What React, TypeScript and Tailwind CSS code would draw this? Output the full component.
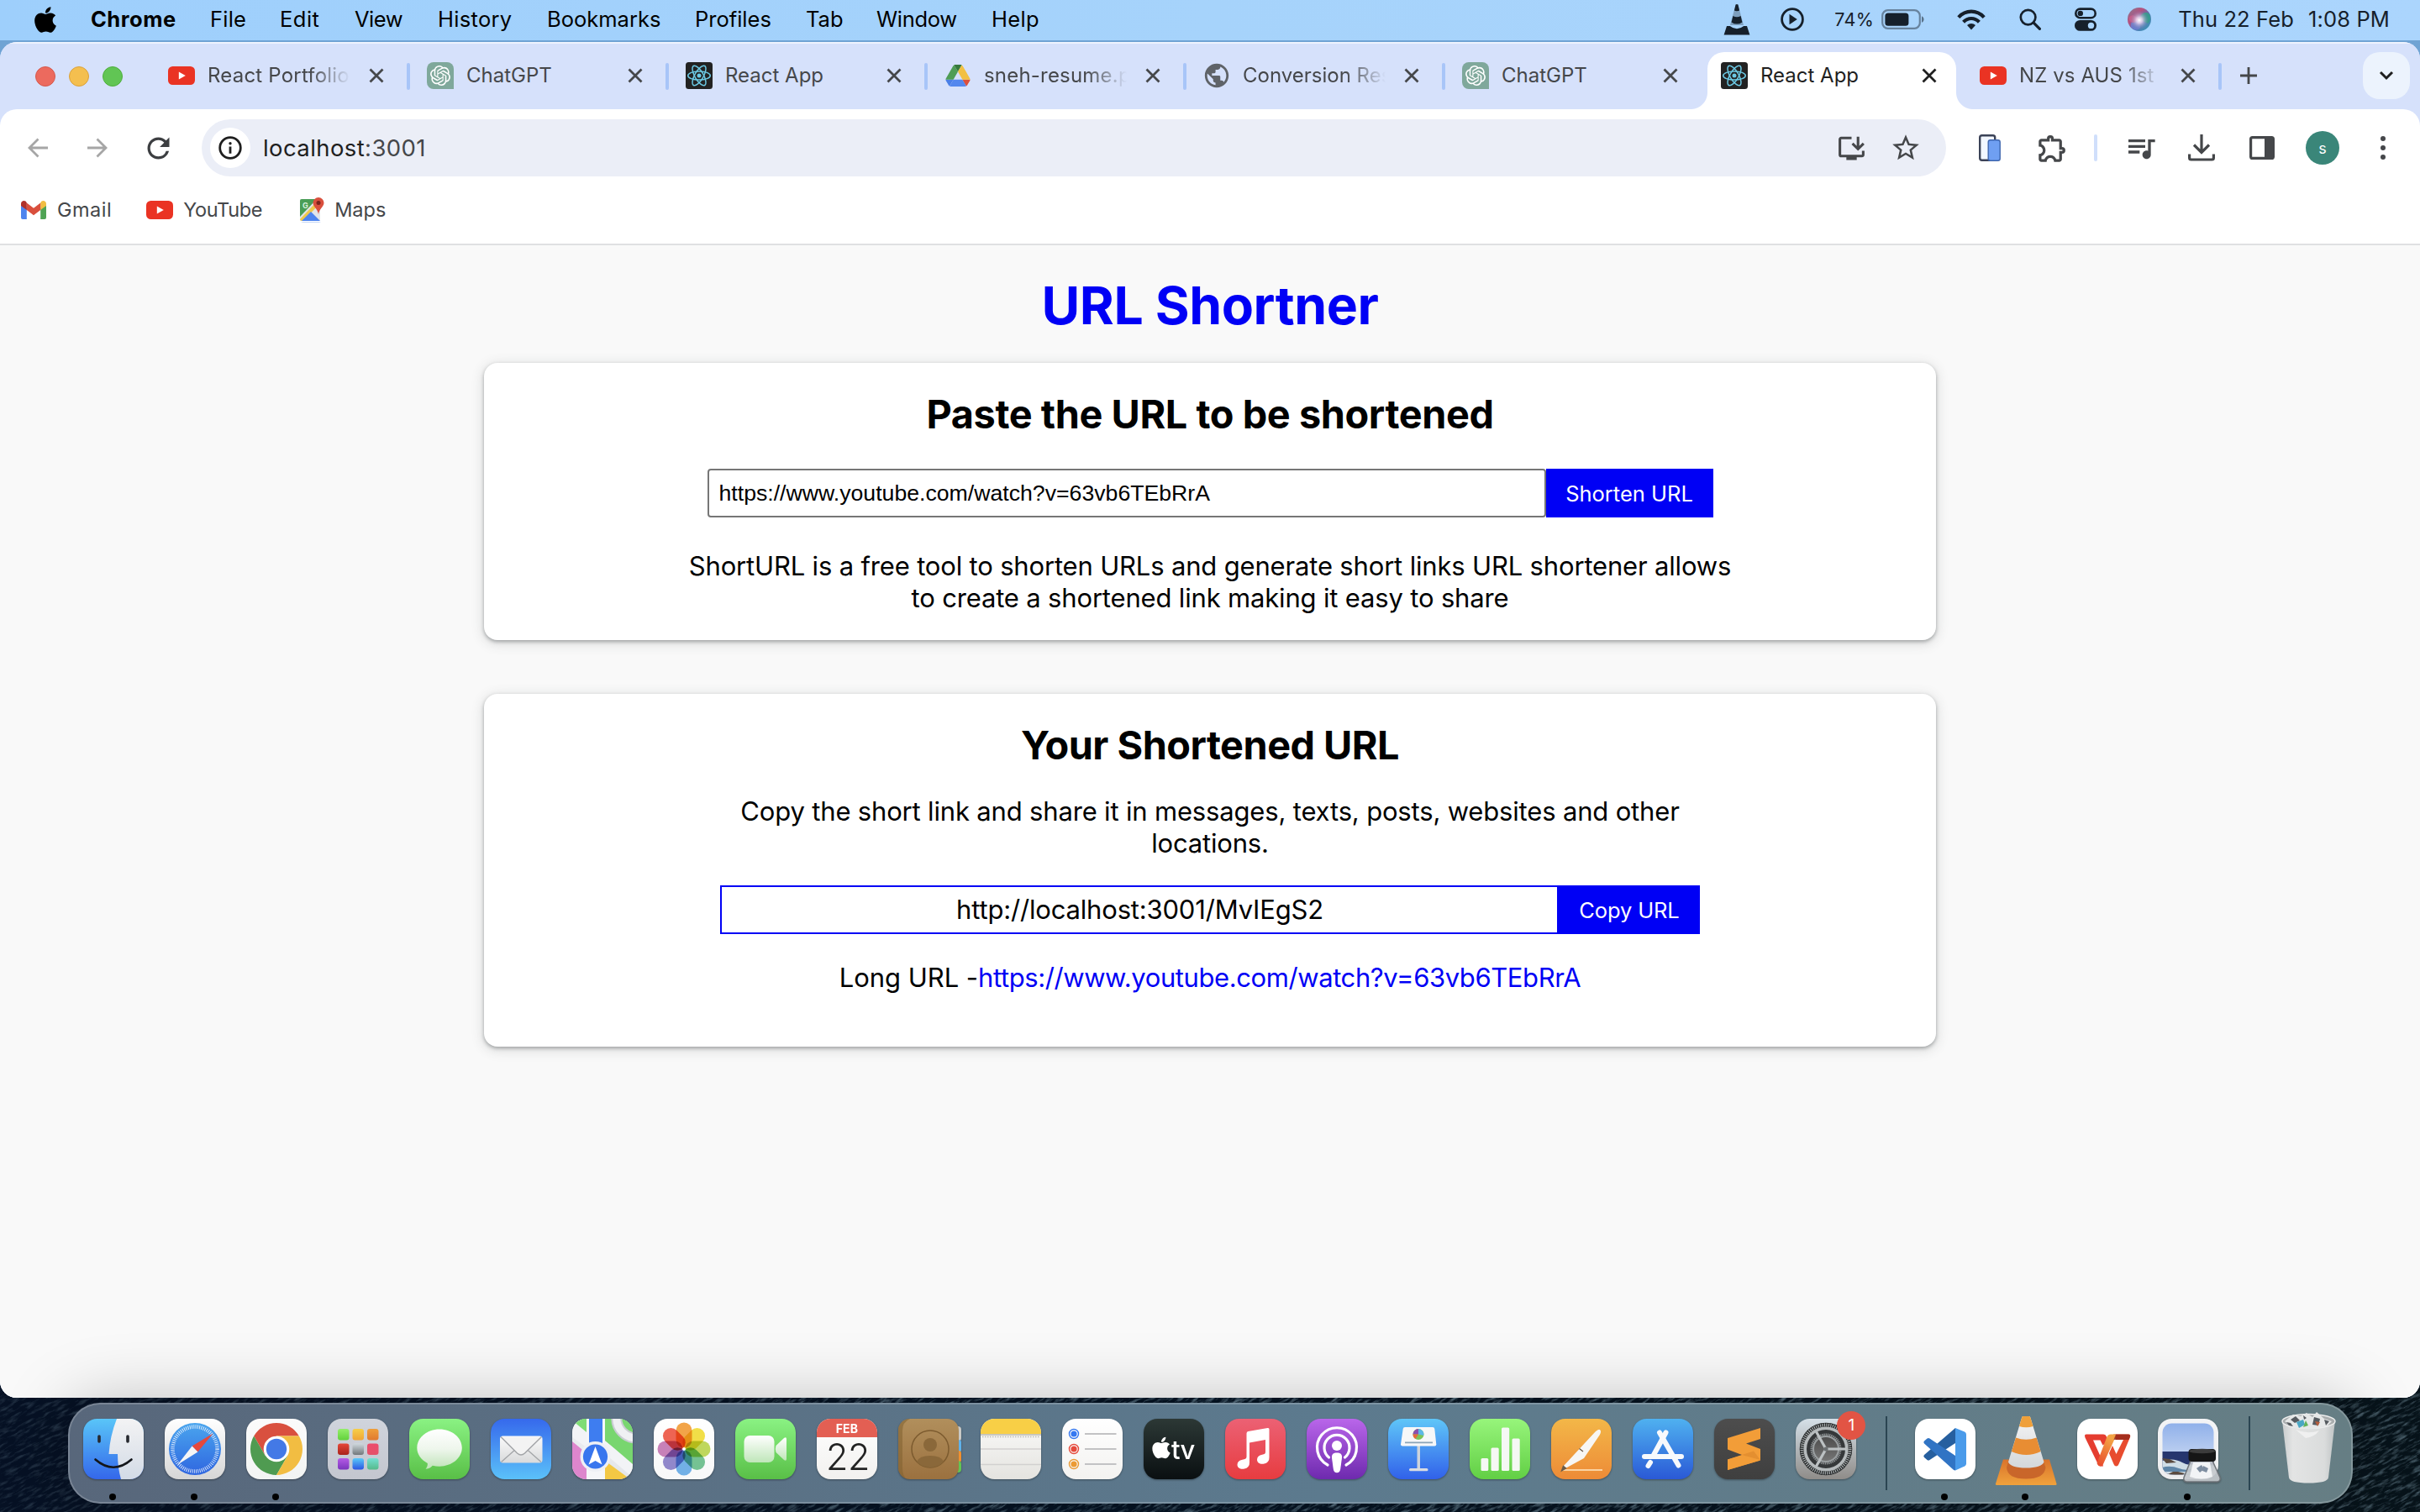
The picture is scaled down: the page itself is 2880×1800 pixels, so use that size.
import React from "react";
import { FaApple } from "react-icons/fa";
import { SiOpenai } from "react-icons/si";
import {
  MdOutlineInstallDesktop,
  MdStarOutline,
  MdOutlineExtension,
  MdQueueMusic,
  MdRefresh,
  MdPublic,
} from "react-icons/md";

/* ---------------------------------------------------------------- menu bar */

const menuItems: { label: string; cls: string }[] = [
  { label: "Chrome", cls: "w-[142px] font-bold tracking-[0.5px]" },
  { label: "File", cls: "w-[83px] tracking-[0.2px]" },
  { label: "Edit", cls: "w-[89px] tracking-[0.5px]" },
  { label: "View", cls: "w-[99px] tracking-[-0.5px]" },
  { label: "History", cls: "w-[130px] tracking-[0.3px]" },
  { label: "Bookmarks", cls: "w-[176px]" },
  { label: "Profiles", cls: "w-[132px]" },
  { label: "Tab", cls: "w-[84px]" },
  { label: "Window", cls: "w-[137px] tracking-[-0.3px]" },
  { label: "Help", cls: "tracking-[0.3px]" },
];

function Siri() {
  return (
    <svg viewBox="0 0 28 28" className="h-7 w-7">
      <defs>
        <radialGradient id="siriCore" cx=".5" cy=".52" r=".5">
          <stop offset="0" stopColor="#fff" />
          <stop offset=".3" stopColor="#e9d5ee" stopOpacity=".85" />
          <stop offset="1" stopColor="#5a6ea0" stopOpacity="0" />
        </radialGradient>
        <linearGradient id="siriRing" x1="0" y1="0" x2="1" y2="1">
          <stop offset="0" stopColor="#7d7e93" />
          <stop offset=".35" stopColor="#b8507e" />
          <stop offset=".6" stopColor="#4f74b5" />
          <stop offset="1" stopColor="#3aa0b4" />
        </linearGradient>
      </defs>
      <circle cx="14" cy="14" r="14" fill="url(#siriRing)" />
      <path d="M14 14C16 6 22 4 26 8C28 12 27 17 24 19Z" fill="#2fa584" opacity=".8" />
      <path d="M14 14C6 14 3 18 4 23C8 28 14 27 15 24Z" fill="#6f7fd6" opacity=".8" />
      <path d="M14 14C8 8 4 8 2 12C1 16 4 18 8 18Z" fill="#d85b88" opacity=".8" />
      <circle cx="14" cy="14.5" r="12" fill="url(#siriCore)" />
    </svg>
  );
}

function MenuBar() {
  return (
    <header className="flex h-12 shrink-0 items-center bg-gradient-to-r from-[#9ecffc] via-[#a6d3fb] to-[#abd5fd] pb-[2px] pl-[37px] text-[25.5px] leading-[46px] text-black">
      <FaApple className="mr-[37px] h-[35px] w-[34px] shrink-0" />
      <nav className="flex">
        {menuItems.map((m) => (
          <span key={m.label} className={m.cls}>
            {m.label}
          </span>
        ))}
      </nav>
      <div className="ml-auto flex items-center pr-[36px] text-[#16202b]">
        <svg viewBox="0 0 32 38" className="mr-[36px] h-[38px] w-8">
          <path d="M14.6 1.5h2.8L24 26H8z" fill="#7e9fbe" />
          <path d="M14.6 1.5q1.4-1 2.8 0l1.7 7q-3.1 1.6-6.2 0zM11.4 15q4.6 2.4 9.2 0l1.8 7.4q-6.4 4.4-12.8 0zM4 27h3.8q8.2 6.6 16.4 0H28l3.4 10.6H.6z" fill="#16202b" />
        </svg>
        <svg viewBox="0 0 28 28" className="mr-[36px] h-7 w-7">
          <circle cx="14" cy="14" r="12.4" fill="none" stroke="#16202b" strokeWidth="2.8" />
          <path d="M10.5 7.8l9.3 6.2-9.3 6.2z" fill="#16202b" />
        </svg>
        <span className="mr-[9px] text-[21.5px] tracking-[0.4px]">74%</span>
        <svg viewBox="0 0 52 24" className="mr-[38px] h-6 w-[52px]">
          <rect x="1.2" y="1.2" width="44.6" height="21.6" rx="6.5" fill="none" stroke="#16202b" strokeOpacity=".45" strokeWidth="2.2" />
          <rect x="4.4" y="4.4" width="28" height="15.4" rx="3.6" fill="#16202b" />
          <path d="M48 8.2c3.4 1.4 3.4 6.2 0 7.6z" fill="#16202b" fillOpacity=".55" />
        </svg>
        <svg viewBox="0 0 34 25" className="mr-[40px] h-[25px] w-[34px]">
          <g fill="none" stroke="#16202b" strokeWidth="4.2">
            <path d="M1.8 9.6C10.4.4 23.6.4 32.2 9.6" />
            <path d="M7.6 15.2c5.4-5.6 13.4-5.6 18.8 0" />
          </g>
          <path d="M17 24.4l-5-5.4c2.9-2.7 7.1-2.7 10 0z" fill="#16202b" />
        </svg>
        <svg viewBox="0 0 26 26" className="mr-[40px] h-[26px] w-[26px]">
          <circle cx="10.6" cy="10.6" r="8.8" fill="none" stroke="#16202b" strokeWidth="2.7" />
          <path d="M17.2 17.2L24.4 24.4" stroke="#16202b" strokeWidth="3.2" strokeLinecap="round" />
        </svg>
        <svg viewBox="0 0 26 28" className="mr-[37px] h-7 w-[26px]">
          <rect x="1.3" y="1.6" width="23.4" height="10.6" rx="5.3" fill="none" stroke="#16202b" strokeWidth="2.6" />
          <circle cx="6.8" cy="6.9" r="3.2" fill="#16202b" />
          <rect x="0" y="15" width="26" height="12.8" rx="6.4" fill="#16202b" />
          <circle cx="19.5" cy="21.4" r="3.7" fill="#abd5fd" />
        </svg>
        <Siri />
        <span className="ml-[32px] tracking-[0.1px]">Thu 22 Feb</span>
        <span className="ml-[17px] tracking-[0.15px]">1:08 PM</span>
      </div>
    </header>
  );
}

/* ------------------------------------------------------------ browser tabs */

function YouTubeIcon() {
  return (
    <svg viewBox="0 0 32 22" className="h-[22px] w-8">
      <rect width="32" height="22" rx="5.5" fill="#ea3323" />
      <path d="M12.8 6.4l8 4.6-8 4.6z" fill="#fff" />
    </svg>
  );
}

function ChatGptIcon() {
  return (
    <span className="flex h-8 w-8 items-center justify-center rounded-[8px] rounded-br-none bg-[#7fa89b]">
      <SiOpenai className="h-[24px] w-[24px] text-white" />
    </span>
  );
}

function ReactIcon() {
  return (
    <svg viewBox="0 0 32 32" className="h-8 w-8">
      <rect width="32" height="32" rx="3.5" fill="#222" />
      <g fill="none" stroke="#6cc9e4" strokeWidth="1.5">
        <ellipse cx="16" cy="16" rx="13.3" ry="5.1" />
        <ellipse cx="16" cy="16" rx="13.3" ry="5.1" transform="rotate(60 16 16)" />
        <ellipse cx="16" cy="16" rx="13.3" ry="5.1" transform="rotate(120 16 16)" />
      </g>
      <circle cx="16" cy="16" r="2.5" fill="#6cc9e4" />
    </svg>
  );
}

function DriveIcon() {
  return (
    <svg viewBox="0 0 87.3 78" className="h-[26px] w-[30px]">
      <path d="M6.6 66.85l3.85 6.65c.8 1.4 1.95 2.5 3.3 3.3l13.75-23.8H0c0 1.55.4 3.1 1.2 4.5z" fill="#4a7fe6" />
      <path d="M43.65 25L29.9 1.2c-1.35.8-2.5 1.9-3.3 3.3L1.2 48.5A9 9 0 000 53h27.5z" fill="#4f9d55" />
      <path d="M73.55 76.8c1.35-.8 2.5-1.9 3.3-3.3l1.6-2.75L86.1 57.5c.8-1.4 1.2-2.95 1.2-4.5H59.8l5.85 11.5z" fill="#dc4f3c" />
      <path d="M43.65 25L57.4 1.2C56.05.4 54.5 0 52.9 0H34.4c-1.6 0-3.15.45-4.5 1.2z" fill="#377a3c" />
      <path d="M59.8 53H27.5L13.75 76.8c1.35.8 2.9 1.2 4.5 1.2h50.8c1.6 0 3.15-.45 4.5-1.2z" fill="#5387ee" />
      <path d="M73.4 26.5L60.7 4.5c-.8-1.4-1.95-2.5-3.3-3.3L43.65 25 59.8 53h27.45c0-1.55-.4-3.1-1.2-4.5z" fill="#f2c043" />
    </svg>
  );
}

type TabInfo = {
  title: string;
  icon: React.ReactNode;
  fade?: boolean;
  active?: boolean;
  sep?: boolean;
  track?: string;
};

const tabs: TabInfo[] = [
  { title: "React Portfolio", icon: <YouTubeIcon />, fade: true, sep: true, track: "tracking-[0.2px]" },
  { title: "ChatGPT", icon: <ChatGptIcon />, sep: true },
  { title: "React App", icon: <ReactIcon />, sep: true },
  { title: "sneh-resume.p", icon: <DriveIcon />, fade: true, sep: true, track: "tracking-[0.2px]" },
  { title: "Conversion Res", icon: <MdPublic className="h-[34px] w-[34px] shrink-0 text-[#5f6368]" />, fade: true, sep: true },
  { title: "ChatGPT", icon: <ChatGptIcon /> },
  { title: "React App", icon: <ReactIcon />, active: true },
  { title: "NZ vs AUS 1st", icon: <YouTubeIcon />, fade: true, sep: true, track: "tracking-[0.1px]" },
];

function CloseX({ dark }: { dark?: boolean }) {
  return (
    <svg viewBox="0 0 24 24" className="ml-[10px] h-6 w-6 shrink-0">
      <path d="M4.5 4.5l15 15M19.5 4.5l-15 15" stroke={dark ? "#1f1f1f" : "#45474a"} strokeWidth="2.8" />
    </svg>
  );
}

function Tab({ t }: { t: TabInfo }) {
  return (
    <div className="relative flex h-20 w-[308px] shrink-0 items-center pl-[22px]">
      {t.active && (
        <div className="absolute inset-x-[6px] top-[12px] bottom-0 rounded-t-[20px] bg-white">
          <span className="absolute bottom-0 -left-5 h-5 w-5 bg-[radial-gradient(circle_at_0_0,transparent_19.5px,white_20.5px)]" />
          <span className="absolute -right-5 bottom-0 h-5 w-5 bg-[radial-gradient(circle_at_100%_0,transparent_19.5px,white_20.5px)]" />
        </div>
      )}
      <span className="relative flex w-8 shrink-0 items-center justify-center">{t.icon}</span>
      <span
        className={`relative ml-[15px] block w-[179px] shrink-0 text-[24px] leading-[36px] whitespace-nowrap ${
          t.active ? "text-[#1f1f1f]" : "text-[#45474a]"
        } ${t.fade ? "[mask-image:linear-gradient(to_right,black_68%,transparent_95%)]" : ""} ${t.track ?? ""}`}
      >
        {t.title}
      </span>
      <span className="relative">
        <CloseX dark={t.active} />
      </span>
      {t.sep && <span className="absolute top-[25px] -right-[2px] h-8 w-1 rounded-full bg-[#a8c5f8]" />}
    </div>
  );
}

function TabStrip() {
  return (
    <div className="flex h-20 items-center bg-[#d6e1fb] pl-[42px] shadow-[inset_0_2px_0_#eef3fe]">
      <div className="flex w-[136px] shrink-0 gap-4 pt-[2px]">
        <span className="h-6 w-6 rounded-full border border-[#d5584c] bg-[#ec6a5e]" />
        <span className="h-6 w-6 rounded-full border border-[#dba13a] bg-[#f4bf4f]" />
        <span className="h-6 w-6 rounded-full border border-[#4fae3d] bg-[#61c554]" />
      </div>
      {tabs.map((t, i) => (
        <Tab key={i} t={t} />
      ))}
      <svg viewBox="0 0 24 24" className="ml-[22px] h-6 w-6 shrink-0">
        <path d="M12 2v20M2 12h20" stroke="#45474a" strokeWidth="2.8" />
      </svg>
      <span className="mr-3 ml-auto flex h-14 w-14 items-center justify-center rounded-[20px] bg-[#ecf3fd]">
        <svg viewBox="0 0 18 12" className="h-3 w-[18px]">
          <path d="M2 2l7 7 7-7" fill="none" stroke="#1f1f1f" strokeWidth="3" />
        </svg>
      </span>
    </div>
  );
}

/* ----------------------------------------------------------------- toolbar */

function Toolbar() {
  return (
    <div className="flex h-[92px] items-center pl-[33px] text-[#45474a]">
      <svg viewBox="0 0 24 24" className="mr-[47px] h-6 w-6">
        <path d="M24 12H2.500M12.500 1.500L2 12l10.500 10.500" fill="none" stroke="#a6a6a6" strokeWidth="2.8" />
      </svg>
      <svg viewBox="0 0 24 24" className="mr-[41px] h-6 w-6">
        <path d="M0 12h21.500M11.500 1.500L22 12 11.500 22.500" fill="none" stroke="#a6a6a6" strokeWidth="2.8" />
      </svg>
      <MdRefresh className="mr-[32px] h-[39px] w-[39px] shrink-0 text-[#3c3e41]" />
      <div className="flex h-[68px] w-[2076px] shrink-0 items-center rounded-full bg-[#ebeef7] pr-[29px] pl-[10px]">
        <span className="flex h-12 w-12 items-center justify-center rounded-full bg-white">
          <svg viewBox="0 0 28 28" className="h-7 w-7">
            <circle cx="14" cy="14" r="12.3" fill="none" stroke="#1f1f1f" strokeWidth="2.8" />
            <path d="M14 12.5v8.3" stroke="#1f1f1f" strokeWidth="2.8" />
            <circle cx="14" cy="8.7" r="1.7" fill="#1f1f1f" />
          </svg>
        </span>
        <span className="ml-[15px] pt-[1px] text-[27.5px] tracking-[0.4px] text-[#1f1f1f]">
          localhost<span className="text-[#45474a]">:3001</span>
        </span>
        <MdOutlineInstallDesktop className="mr-[27px] ml-auto h-[37px] w-[37px]" />
        <MdStarOutline className="h-[38px] w-[38px]" />
      </div>
      <svg viewBox="0 0 26 32" className="ml-[39px] h-8 w-[26px]">
        <rect x="1.2" y="1.2" width="18" height="29.6" rx="2.5" fill="#f2f7ff" stroke="#3b4257" strokeWidth="2.4" />
        <rect x="11.2" y="6.8" width="14" height="24.4" rx="2.5" fill="#6f9ff2" stroke="#3f66ae" strokeWidth="1.4" />
      </svg>
      <MdOutlineExtension className="ml-[42px] h-[39px] w-[39px]" />
      <span className="ml-[30px] h-8 w-1 rounded-full bg-[#d0dffb]" />
      <MdQueueMusic className="ml-[32px] h-[40px] w-[40px]" />
      <svg viewBox="0 0 32 32" className="ml-[36px] h-8 w-8">
        <path d="M16 0v21M7 12.500l9 9 9-9M1.600 23.500V28q0 2 2 2h24.800q2 0 2-2v-4.500" fill="none" stroke="#45474a" strokeWidth="3.2" />
      </svg>
      <svg viewBox="0 0 30 28" className="ml-[41px] h-7 w-[30px]">
        <rect x="1.6" y="1.6" width="26.8" height="24.8" rx="2" fill="none" stroke="#45474a" strokeWidth="3.2" />
        <path d="M18 1h11v26H18z" fill="#45474a" />
      </svg>
      <span className="ml-[37px] flex h-10 w-10 items-center justify-center rounded-full bg-[#3a8679] text-[18px] text-white">s</span>
      <span className="ml-[49px] flex flex-col gap-[5px]">
        <i className="h-[6px] w-[6px] rounded-full bg-[#45474a]" />
        <i className="h-[6px] w-[6px] rounded-full bg-[#45474a]" />
        <i className="h-[6px] w-[6px] rounded-full bg-[#45474a]" />
      </span>
    </div>
  );
}

function BookmarksBar() {
  return (
    <div className="flex h-[70px] items-center border-b-2 border-[#dfe0e2] pb-[12px] pl-[25px] text-[23.5px] text-[#45474a]">
      <svg viewBox="0 0 30 22" className="h-[22px] w-[30px]">
        <path d="M0 4v16q0 2 2 2h4.800V9z" fill="#4e84ee" />
        <path d="M30 4v16q0 2-2 2h-4.800V9z" fill="#4fa354" />
        <path d="M23.200 2.600V11L30 6V3.500C30 .4 26.600-1 24.200.8z" fill="#f2bd42" />
        <path d="M6.800 11V2.600L15 8.800l8.200-6.200V11L15 17.200z" fill="#d94f3d" />
        <path d="M0 3.500V6l6.800 5V2.600L5.800.8C3.400-1 0 .4 0 3.500z" fill="#b0312a" />
      </svg>
      <span className="ml-[13px] tracking-[0.5px]">Gmail</span>
      <span className="ml-[41px]">
        <YouTubeIcon />
      </span>
      <span className="ml-[12px] tracking-[-0.35px]">YouTube</span>
      <svg viewBox="0 0 30 30" className="ml-[44px] h-[30px] w-[30px]">
        <path d="M1 4q0-2 2-2h22v26H3q-2 0-2-2z" fill="#e2e5ea" />
        <path d="M1 4q0-2 2-2h18L1 23z" fill="#4a9e57" />
        <path d="M1 26L21 5l3 3L5 28H3q-2 0-2-2z" fill="#f0c84b" />
        <path d="M14 17l11 11H3z" fill="#4e84ee" />
        <path d="M2 30q2-1 3-1h19l2 1z" fill="#c6d7f6" />
        <text x="4" y="12.500" fontSize="9" fontWeight="700" fill="#d7f0da">G</text>
        <path d="M23 0a6.500 6.500 0 016.500 6.500C29.500 11 24 13.500 23 20c-1-6.500-6.500-9-6.500-13.500A6.500 6.500 0 0123 0z" fill="#d94f3d" />
        <circle cx="23" cy="6.600" r="2.500" fill="#7c231c" />
      </svg>
      <span className="ml-[12px]">Maps</span>
    </div>
  );
}

/* --------------------------------------------------------------- page body */

const cardCls =
  "mx-auto flex w-[1728px] flex-col items-center rounded-[16px] bg-white shadow-[0_2px_4px_rgba(60,64,67,0.4),0_3px_14px_2px_rgba(60,64,67,0.15)]";

function Page() {
  return (
    <main className="flex-1 bg-[#f9f9f9] pt-[33px] text-black">
      <h1 className="text-center text-[62.5px] leading-[76px] font-bold tracking-[-0.43px] text-[#0000f5]">URL Shortner</h1>
      <section className={`${cardCls} mt-[31px] h-[330px] pt-[32px]`}>
        <h2 className="text-[46.8px] leading-[58px] font-bold tracking-[-0.4px]">Paste the URL to be shortened</h2>
        <div className="mt-[36px] flex h-[58px]">
          <div className="flex w-[998px] items-center rounded-[4px] border-2 border-[#767676] bg-white pl-[12px] font-['Liberation_Sans'] text-[26.67px]">
            https://www.youtube.com/watch?v=63vb6TEbRrA
          </div>
          <button className="w-[199px] bg-[#0000f5] pt-[3px] text-[25.5px] text-white">Shorten URL</button>
        </div>
        <p className="mt-[39px] text-center text-[31px] leading-[38px] tracking-[-0.17px]">
          ShortURL is a free tool to shorten URLs and generate short links URL shortener allows
          <br />
          to create a shortened link making it easy to share
        </p>
      </section>
      <section className={`${cardCls} mt-[64px] h-[420px] pt-[32px]`}>
        <h2 className="text-[46.8px] leading-[58px] font-bold tracking-[-0.5px]">Your Shortened URL</h2>
        <p className="mt-[31px] text-center text-[31px] leading-[38px] tracking-[-0.17px]">
          Copy the short link and share it in messages, texts, posts, websites and other
          <br />
          locations.
        </p>
        <div className="mt-[31px] flex h-[58px]">
          <div className="flex w-[998px] items-center justify-center border-2 border-[#0000f5] pt-[1px] pl-[1px] text-[31px] tracking-[-0.18px]">
            http://localhost:3001/MvIEgS2
          </div>
          <button className="w-[168px] bg-[#0000f5] pt-[3px] text-[25.5px] tracking-[-0.13px] text-white">Copy URL</button>
        </div>
        <p className="mt-[33px] text-[31px] leading-[38px] tracking-[-0.05px]">
          Long URL -<a className="tracking-[-0.41px] text-[#0000f5]">https://www.youtube.com/watch?v=63vb6TEbRrA</a>
        </p>
      </section>
    </main>
  );
}

/* --------------------------------------------------------------------- dock */

function Grad({ id, a, b, m }: { id: string; a: string; b: string; m?: string }) {
  return (
    <linearGradient id={id} x1="0" y1="0" x2="0" y2="1">
      <stop offset="0" stopColor={a} />
      {m && <stop offset=".5" stopColor={m} />}
      <stop offset="1" stopColor={b} />
    </linearGradient>
  );
}

function Tile({ id, a, b, children }: { id: string; a: string; b: string; children?: React.ReactNode }) {
  return (
    <svg viewBox="0 0 72 72" className="h-[72px] w-[72px] overflow-visible drop-shadow-[0_1px_1px_rgba(0,0,0,0.35)]">
      <defs>
        <Grad id={id} a={a} b={b} />
        <clipPath id={`${id}-clip`}>
          <rect width="72" height="72" rx="16.5" />
        </clipPath>
      </defs>
      <rect width="72" height="72" rx="16.5" fill={`url(#${id})`} />
      {children}
    </svg>
  );
}

const Finder = () => (
  <Tile id="finder" a="#59c5f8" b="#3467ea">
    <defs>
      <Grad id="finderFace" a="#f3f3f4" b="#d3dbe6" />
    </defs>
    <g clipPath="url(#finder-clip)">
      <path d="M40 0Q32 20 30.500 42H41Q41 58 45 72H72V0z" fill="url(#finderFace)" />
    </g>
    <path d="M19 21v6M53 21v6" stroke="#26292f" strokeWidth="3.600" strokeLinecap="round" />
    <path d="M14.500 48.500Q36 67 57.500 48.500" fill="none" stroke="#14161a" strokeWidth="2.600" strokeLinecap="round" />
  </Tile>
);

const Safari = () => (
  <Tile id="safari" a="#ffffff" b="#d6d6d6">
    <defs>
      <Grad id="safariDial" a="#4aa5ee" b="#2f66e0" />
    </defs>
    <circle cx="36" cy="36" r="31" fill="url(#safariDial)" />
    <circle cx="36" cy="36" r="26.500" fill="none" stroke="#fff" strokeOpacity=".85" strokeWidth="4.500" strokeDasharray=".9 1.410" />
    <path d="M57.500 17.500L32.600 32.600l6.800 6.800z" fill="#e5483c" />
    <path d="M15.500 54.500l17.100-21.900 6.800 6.800z" fill="#f5f5f6" />
  </Tile>
);

const Chrome = () => (
  <Tile id="chrome" a="#fbfbfb" b="#f2f4f3">
    <path d="M9.150 20.500A31 31 0 0162.850 20.500H36L22.600 43.750z" fill="#d9503f" />
    <path d="M9.150 20.500L22.580 43.750 36 36l13.420 7.750L36 67A31 31 0 019.150 20.500z" fill="#4f9b51" />
    <path d="M62.850 20.500A31 31 0 0136 67l13.420-23.250L36 36V20.500z" fill="#f2bd42" />
    <circle cx="36" cy="36" r="15.300" fill="#fff" />
    <circle cx="36" cy="36" r="12.200" fill="#4379e6" />
  </Tile>
);

const launchCells: [number, number, string, string][] = [
  [12, 12, "#94ee6b", "#62d13c"],
  [29.5, 12, "#f6cf48", "#f0a536"],
  [47, 12, "#ef9f3a", "#e0792f"],
  [12, 29.5, "#e5483a", "#a9231b"],
  [29.5, 29.5, "#cfd8dd", "#71777b"],
  [47, 29.5, "#ec4c6c", "#e4526a"],
  [12, 47, "#b55be6", "#7a35bd"],
  [29.5, 47, "#58c9fa", "#2d56e2"],
  [47, 47, "#74e0d3", "#56b98a"],
];
const Launchpad = () => (
  <Tile id="launch" a="#d0d4dc" b="#c3c6cf">
    {launchCells.map(([x, y, a, b], i) => (
      <g key={i}>
        <defs>
          <Grad id={`lc${i}`} a={a} b={b} />
        </defs>
        <rect x={x} y={y} width="13.5" height="13.5" rx="3" fill={`url(#lc${i})`} />
      </g>
    ))}
  </Tile>
);

const Messages = () => (
  <Tile id="msg" a="#8af283" b="#59bf47">
    <defs>
      <Grad id="msgB" a="#ffffff" m="#eef6ec" b="#bfe3b8" />
    </defs>
    <path d="M36 12.500c14.800 0 26.800 9.900 26.800 22.100S50.800 56.700 36 56.700c-2.900 0-5.600-.4-8.200-1-2.300 2.500-5 3.900-8.300 4 1.700-1.800 2.600-4 2.300-6.700C14.300 49.200 9.300 42.600 9.300 34.600c0-12.200 11.900-22.100 26.700-22.100z" fill="url(#msgB)" />
  </Tile>
);

const Mail = () => (
  <Tile id="mail" a="#3669ec" b="#5bc1f9">
    <defs>
      <Grad id="mailE" a="#fbfbfb" b="#d9dadb" />
    </defs>
    <rect x="11" y="20.500" width="50.500" height="32" rx="3.500" fill="url(#mailE)" />
    <path d="M12.500 51.500L30 36M60 51.500L42.500 36" stroke="#a3a5a8" strokeWidth="1.300" fill="none" />
    <path d="M12 21.500L31.500 41q4.500 4 9 0L60.500 21.500" fill="#f3f3f3" stroke="#a3a5a8" strokeWidth="1.500" />
  </Tile>
);

const Maps = () => (
  <Tile id="maps" a="#eceef2" b="#e4e6ea">
    <g clipPath="url(#maps-clip)">
      <path d="M0 5v-5h17v30z" fill="#7fdc76" />
      <path d="M39 0h33v60L39 34z" fill="#78d66f" />
      <path d="M0 27l17 14v31H0z" fill="#dd86cd" />
      <path d="M39 50l30 22H39z" fill="#f3c844" />
      <path d="M0 8L72 70v-16L0-8z" fill="#f2f3f6" />
      <path d="M0 -20h17v36L0 2z" fill="#7fdc76" />
      <path d="M0 5l17 15v14L0 22z" fill="#f2f3f6" />
      <path d="M39 0h33v52L39 26z" fill="#78d66f" />
      <path d="M53-4a24 24 0 0026 27" fill="none" stroke="#c9ccd2" strokeWidth="13" />
      <path d="M53-4a24 24 0 0026 27" fill="none" stroke="#eff0f3" strokeWidth="9" />
      <path d="M17 0h22v72H17z" fill="#f5f6f8" />
      <path d="M20 0h16v36H20z" fill="#3e7df0" />
    </g>
    <circle cx="27.500" cy="45" r="18" fill="#eef0f5" />
    <circle cx="27.500" cy="45" r="14.600" fill="#3876ee" />
    <path d="M27.500 33l8 21.500-8-4.600-8 4.600z" fill="#fff" />
  </Tile>
);

const petals: [number, string][] = [
  [0, "#f0972f"],
  [45, "#efd92f"],
  [90, "#b6d145"],
  [135, "#62b984"],
  [180, "#5ea5e2"],
  [225, "#8277c4"],
  [270, "#bf6fae"],
  [315, "#ec4f3b"],
];
const Photos = () => (
  <Tile id="photos" a="#ffffff" b="#f8f8f8">
    <g className="isolate">
      {petals.map(([r, c]) => (
        <rect key={r} x="26.5" y="4.5" width="19" height="30" rx="9.5" fill={c} fillOpacity=".88" transform={`rotate(${r} 36 36)`} className="mix-blend-multiply" />
      ))}
    </g>
    <circle cx="36" cy="36" r="1.8" fill="#fff" />
  </Tile>
);

const FaceTime = () => (
  <Tile id="ft" a="#8af283" b="#59bf47">
    <defs>
      <Grad id="ftB" a="#ffffff" b="#bfe6b9" />
    </defs>
    <rect x="10.500" y="20" width="36" height="32" rx="7" fill="url(#ftB)" />
    <path d="M48.500 32l9.500-9q3-2 3 1.500v23q0 3.500-3 1.500l-9.500-9q-1.500-4 0-8z" fill="url(#ftB)" />
  </Tile>
);

const Calendar = () => (
  <Tile id="cal" a="#ffffff" b="#f2f1ef">
    <path d="M0 22h72v-5.500A16.500 16.500 0 0055.500 0h-39A16.500 16.500 0 000 16.500z" fill="#e35f53" />
    <text x="36" y="17" textAnchor="middle" fontSize="14" fontWeight="700" letterSpacing=".2" fill="#fff">FEB</text>
    <text x="36" y="61" textAnchor="middle" fontSize="43" fontWeight="300" letterSpacing="-2.5" fill="#232323" textLength="50">22</text>
  </Tile>
);

const Contacts = () => (
  <svg viewBox="0 0 76 72" className="-mr-1 h-[72px] w-[76px] max-w-none overflow-visible drop-shadow-[0_1px_1px_rgba(0,0,0,0.35)]">
    <defs>
      <Grad id="ctc" a="#b18f5c" b="#9b713f" />
    </defs>
    <rect x="66" y="9" width="9" height="18" rx="4" fill="#c9c9c6" />
    <rect x="66" y="25" width="9" height="15" rx="3" fill="#5fb2ea" />
    <rect x="66" y="38" width="9" height="14" rx="3" fill="#f0902f" />
    <rect x="66" y="50" width="9" height="14" rx="4" fill="#62c554" />
    <rect width="72" height="72" rx="14" fill="url(#ctc)" />
    <path d="M14 0A14 14 0 000 14v44a14 14 0 0014 14h-4Q5 68 5 58V14Q5 4 14 0z" fill="#80602f" opacity=".55" />
    <circle cx="38" cy="36" r="22" fill="none" stroke="#7c5b2f" strokeWidth="1.500" />
    <circle cx="38" cy="31" r="8" fill="#8a683a" />
    <path d="M22 51q3-7 16-7t16 7q-6 7-16 7t-16-7z" fill="#8a683a" />
  </svg>
);

const Notes = () => (
  <Tile id="notes" a="#fbfbfa" b="#e4e3df">
    <path d="M0 18h72v-1.500A16.500 16.500 0 0055.500 0h-39A16.500 16.500 0 000 16.500z" fill="#f8cf46" />
    <path d="M0 19h72" stroke="#b9b7ad" strokeWidth="1.500" />
    <path d="M2 21.500h68" stroke="#bdbbb5" strokeWidth="1.600" strokeDasharray="1.500 1.500" />
    <path d="M0 36h72M0 54.500h72" stroke="#d2d1d0" strokeWidth="1.300" />
  </Tile>
);

const Reminders = () => (
  <Tile id="rem" a="#ffffff" b="#f3f2f0">
    {[
      [18, "#3578f1"],
      [36, "#e64a3c"],
      [54, "#eb9a34"],
    ].map(([y, c]) => (
      <g key={c}>
        <circle cx="14" cy={y} r="5.5" fill="none" stroke={c as string} strokeWidth="1.4" />
        <circle cx="14" cy={y} r="3.6" fill={c as string} />
        <path d={`M27 ${y}h37.5`} stroke="#c2c2c4" strokeWidth="1.8" />
      </g>
    ))}
  </Tile>
);

const AppleTv = () => (
  <Tile id="tv" a="#2c3835" b="#0a0f11">
    <FaApple x="6.500" y="20" size={29} color="#fff" />
    <text x="33" y="48" fontSize="31" fontWeight="500" letterSpacing="-.8" fill="#fff">tv</text>
  </Tile>
);

const Music = () => (
  <Tile id="music" a="#ec6174" b="#e73c40">
    <path d="M25.500 17.500q0-2 2-2.400l23-4q2-.4 2 1.500V46a7 7 0 01-6 7.500c-4.500 1-8.500-1-8.500-4.800 0-3.200 2.300-5.200 6-6 3-.6 4-1.200 4-3.500V25L29 28.600V52a7 7 0 01-6 7.500c-4.500 1-8.500-1-8.500-4.800 0-3.200 2.300-5.200 6-6 3-.6 5-1.200 5-3.500z" fill="#fff" />
  </Tile>
);

const Podcasts = () => (
  <Tile id="pod" a="#b966ea" b="#6e2aae">
    <g fill="none" stroke="#fff" strokeWidth="3.200" strokeLinecap="round">
      <path d="M25 55A23.500 23.500 0 1147 55" />
      <path d="M26.500 46A15 15 0 1145.500 46" />
    </g>
    <circle cx="36" cy="32" r="6" fill="#fff" />
    <path d="M36 40.500c4 0 6.500 1.600 6 6l-1.800 13.500c-.5 3-2 4.200-4.200 4.200s-3.700-1.200-4.200-4.200L30 46.500c-.5-4.400 2-6 6-6z" fill="#fff" />
  </Tile>
);

const Keynote = () => (
  <Tile id="key" a="#5fc6f8" b="#3161ea">
    <path d="M34.500 32h3.500v28h-3.500z" fill="#cdd3db" />
    <rect x="25" y="59" width="22.500" height="3.200" rx="1.500" fill="#d9dce2" />
    <path d="M20 10h33q2 0 2.300 2l2 18.500q0 2-2 2H17q-2 0-2-2l2.700-18.500q.3-2 2.300-2z" fill="#f6f7f8" />
    <path d="M20 27.500h33v1.800H20z" fill="#8aa4b8" />
    <circle cx="36" cy="18.500" r="6.500" fill="#7cc45a" />
    <path d="M36 18.500V12a6.500 6.500 0 016.300 8z" fill="#5db8e8" />
    <path d="M36 18.500V12a6.500 6.500 0 00-6.500 6.500z" fill="#8b4fb0" />
    <path d="M36 18.500h-6.500a6.500 6.500 0 003 5.500z" fill="#ea6a3b" />
  </Tile>
);

const Numbers = () => (
  <Tile id="num" a="#97f57b" b="#62cf45">
    <g fill="#f5f8f4">
      <rect x="13.500" y="47" width="8.800" height="15" rx="1.600" />
      <rect x="25.500" y="34.500" width="9.200" height="27.500" rx="1.600" />
      <rect x="38" y="10.500" width="9.200" height="51.500" rx="1.600" />
      <rect x="50.500" y="23.500" width="9.200" height="38.500" rx="1.600" />
    </g>
  </Tile>
);

const Pages = () => (
  <Tile id="pages" a="#f3b748" b="#ed8b37">
    <path d="M14 61h47" stroke="#fbd3a2" strokeWidth="2" />
    <path d="M58.200 13.200q2 1.800-.6 6.400L39 47 17 59l-4.500 3 2-5.500L33 36.500 52.500 15.500q4-3.800 5.700-2.300z" fill="#f7f6f4" />
    <path d="M33.500 35.500l4.500 3.500M12.500 62l2-5.500 3 2.500z" stroke="#6a5b49" strokeWidth="1.400" fill="#6a5b49" />
  </Tile>
);

const AppStore = () => (
  <Tile id="store" a="#4fb1f0" b="#2a59d6">
    <g stroke="#f7f9fc" strokeWidth="6" strokeLinecap="round">
      <path d="M39.500 16.500L25 43M21 52l-2.500 4" />
      <path d="M14 45h44" />
      <path d="M32 16.500L54.500 55.500" />
    </g>
  </Tile>
);

const Sublime = () => (
  <Tile id="subl" a="#4d4d4d" b="#3f3f3f">
    <path d="M16 48.500L33 43.500 55 49.500 16 61z" fill="#e78f2f" />
    <path d="M16 23L55 11v13L38 29.500 55 36v13.500L16 61V48.500l17-5.500-17-6.500z" fill="#f29d38" />
    <path d="M33 43l14-4.500L55 49z" fill="#d9832a" opacity=".55" />
  </Tile>
);

const Settings = () => (
  <div className="relative">
    <Tile id="set" a="#d5e0e8" b="#8f8c89">
      <defs>
        <Grad id="setG" a="#4c4c4c" b="#767676" />
      </defs>
      <circle cx="36" cy="36" r="31.300" fill="#222526" />
      <circle cx="36" cy="36" r="28.500" fill="none" stroke="#a7acae" strokeWidth="4" strokeDasharray="1.200 1.290" />
      <circle cx="36" cy="36" r="24.800" fill="#35383a" stroke="#b5babc" strokeWidth="3.600" />
      <circle cx="36" cy="36" r="17" fill="none" stroke="#8d9193" strokeWidth="3" strokeDasharray="1.400 .8" />
      <circle cx="36" cy="36" r="15" fill="url(#setG)" stroke="#9a9fa1" strokeWidth="2" />
      <path d="M36 36h24M36 36L24.500 15.500M36 36L24.500 56.500" stroke="#bcc1c3" strokeWidth="3.200" />
      <circle cx="36" cy="36" r="2.600" fill="#6b6f71" />
    </Tile>
    <span className="absolute -top-[9px] left-[49px] flex h-[34px] w-[34px] items-center justify-center rounded-full bg-[#e25444] text-[19px] text-white">1</span>
  </div>
);

const VsCode = () => (
  <Tile id="vsc" a="#ffffff" b="#ffffff">
    <path d="M48 11v18L17.500 49q-1.500 1-3 0l-3.500-3q-1.500-1.600 0-3z" fill="#265f9f" />
    <path d="M11 26.500l3.500-3q1.500-1 3 0L48 44v17.500q-1.500 0-2.500-1L11 29.500q-1.500-1.500 0-3z" fill="#3174c4" />
    <path d="M48 11l11 4.500q2 1 2 3v35q0 2-2 3L48 61.500q0-.5 0-2v-46.500z" fill="#4a9bea" />
  </Tile>
);

const Vlc = () => (
  <svg viewBox="0 0 72 72" className="h-[72px] w-[72px] overflow-visible">
    <defs>
      <Grad id="vlcBase" a="#d9732c" b="#f0a23c" />
      <Grad id="vlcWhite" a="#f4f4f4" b="#d4d7da" />
    </defs>
    <path d="M9 48.500h55l8.500 29q.3 1.500-1.500 1.500H1.500Q-.3 79-.1 77.500z" fill="url(#vlcBase)" />
    <path d="M13 58q1 13.500 23 13.500T59.500 58L56 48H16z" fill="#c9662a" />
    <path d="M32.500-3h7.500q1 0 1.500 2L57.500 51.500q-3 7-21.300 7T15 51.500L31-1q.5-2 1.500-2z" fill="url(#vlcWhite)" />
    <path d="M32.500-3h7.500q1 0 1.500 2L44.500 9q-8 2.500-16.500 0L31-1q.5-2 1.500-2z" fill="#efa03a" />
    <path d="M24 22.500Q36 27 48.600 22.500l5 16.500q-17 8-34.700 0z" fill="#e88d33" />
  </svg>
);

const Wps = () => (
  <Tile id="wps" a="#ffffff" b="#ffffff">
    <defs>
      <linearGradient id="wpsO" x1="0" y1="1" x2=".4" y2="0">
        <stop offset="0" stopColor="#e8462c" />
        <stop offset="1" stopColor="#f3a445" />
      </linearGradient>
    </defs>
    <path d="M11 18.500h20q3 0 4 3l1 6-5.500 4-3-6H19l9 20 3 11h-3q-2 0-3-2L9.500 22.500Q8 18.500 11 18.500z" fill="#e53d30" />
    <path d="M43 18.500h18q3 0 2 3.500L49.500 54q-1 2.500-3 2.500t-3-2.500L38 41l4-9 4.500 10L55 25H46z" fill="#e84c2f" />
    <path d="M46 18.500h-6q-3.500 0-5 4L23.500 53q1.500 3.500 4 3.500t3.500-2.500L46 21z" fill="url(#wpsO)" />
    <path d="M46 18.500h15q2.500 0 2 2.500l-1.500 4H43.500z" fill="#8e2418" opacity=".75" />
  </Tile>
);

const Preview = () => (
  <Tile id="prev" a="#f3f4f6" b="#ecedef">
    <defs>
      <Grad id="prevSky" a="#8fb0ea" b="#b9cdf0" />
      <clipPath id="prevPic">
        <rect x="5.500" y="5.500" width="61" height="61" rx="11" />
      </clipPath>
    </defs>
    <g clipPath="url(#prevPic)">
      <path d="M5 5h62v34H5z" fill="url(#prevSky)" />
      <path d="M5 39h62v28H5z" fill="#26366e" />
      <path d="M5 50q14-4 24 2t20 0l18 4v12H5z" fill="#cfdde6" />
      <path d="M5 47l9 1 8 4-12 1zM12 66l8-4 12 3-4 3z" fill="#5a4a3f" />
      <path d="M5 58q10-3 20 1t18-1v5H5z" fill="#5f86a8" />
    </g>
    <path d="M39 50h26l9 20q1 4-3 5H34q-4-1-3-5z" fill="#c4c9cd" fillOpacity=".92" stroke="#6f7479" strokeWidth="1.500" />
    <path d="M42 52h20l3 17q-13 5-27 0z" fill="#f2f4f6" />
    <path d="M46 59l6-4 3 5-5 4zM54 56l6 3-2 5-5-2z" fill="#7d8da0" />
    <rect x="36.500" y="36" width="32.500" height="15" rx="4" fill="#161616" />
    <ellipse cx="52.700" cy="38.500" rx="15.500" ry="2.800" fill="#3c3c3c" />
  </Tile>
);

const Trash = () => (
  <svg viewBox="0 0 72 72" className="h-[72px] w-[72px] overflow-visible">
    <defs>
      <linearGradient id="trashB" x1="0" y1="0" x2="1" y2="0">
        <stop offset="0" stopColor="#c9cccd" />
        <stop offset=".2" stopColor="#e3e4e4" />
        <stop offset=".8" stopColor="#dadcdc" />
        <stop offset="1" stopColor="#bfc3c4" />
      </linearGradient>
    </defs>
    <path d="M5 2l8 68q1 6.500 23.500 6.500T60 70l8-68z" fill="url(#trashB)" />
    <ellipse cx="36.500" cy="3" rx="31.500" ry="8.500" fill="#a9adae" stroke="#eceded" strokeWidth="1.500" />
    <path d="M8 3l10-8 9 2 7-4 7 5 5-6 9 8 9 3-6 6-18 3-20-1z" fill="#e6e8e8" />
    <path d="M15 1l6-4 5 5-6 3zM43-2l7 2-2 8-7-1zM55 1l6 2-4 5zM10 4l5 1 3 4-5-1zM30-4l4 3-3 2z" fill="#565b60" />
    <path d="M22 4l8-3 2 6-7 4z" fill="#4aa7c4" />
    <path d="M33 2l3 6-6 2z" fill="#62b45b" />
    <path d="M44 3l6 1-3 5z" fill="#b55d3d" />
    <path d="M21 13q14 6 28 1-6 8-16 9" fill="#f6f6f6" opacity=".7" />
  </svg>
);

function DockItem({ children, running }: { children: React.ReactNode; running?: boolean }) {
  return (
    <div className="relative h-[72px] w-[72px] shrink-0">
      {children}
      {running && <span className="absolute top-[89px] left-[31px] h-2 w-2 rounded-full bg-black" />}
    </div>
  );
}

function Dock() {
  return (
    <div className="relative mx-auto mt-[6px] flex h-[120px] w-[2719px] shrink-0 rounded-[38px] border-2 border-white/20 bg-gradient-to-r from-[#58677b] via-[#5c7a8e] via-55% to-[#667e84] bg-origin-border pt-[17px] pl-[16px] shadow-[0_0_80px_rgba(0,0,0,0.25)]">
      <div className="flex w-[2111px] shrink-0 justify-between">
        <DockItem running><Finder /></DockItem>
        <DockItem running><Safari /></DockItem>
        <DockItem running><Chrome /></DockItem>
        <DockItem><Launchpad /></DockItem>
        <DockItem><Messages /></DockItem>
        <DockItem><Mail /></DockItem>
        <DockItem><Maps /></DockItem>
        <DockItem><Photos /></DockItem>
        <DockItem><FaceTime /></DockItem>
        <DockItem><Calendar /></DockItem>
        <DockItem><Contacts /></DockItem>
        <DockItem><Notes /></DockItem>
        <DockItem><Reminders /></DockItem>
        <DockItem><AppleTv /></DockItem>
        <DockItem><Music /></DockItem>
        <DockItem><Podcasts /></DockItem>
        <DockItem><Keynote /></DockItem>
        <DockItem><Numbers /></DockItem>
        <DockItem><Pages /></DockItem>
        <DockItem><AppStore /></DockItem>
        <DockItem><Sublime /></DockItem>
        <DockItem><Settings /></DockItem>
      </div>
      <span className="-mt-[3px] ml-[34px] h-[88px] w-[2px] shrink-0 bg-[#2b4552]" />
      <div className="ml-[33px] flex w-[362px] shrink-0 justify-between">
        <DockItem running><VsCode /></DockItem>
        <DockItem running><Vlc /></DockItem>
        <DockItem><Wps /></DockItem>
        <DockItem running><Preview /></DockItem>
      </div>
      <span className="-mt-[3px] ml-[35px] h-[88px] w-[2px] shrink-0 bg-[#2b4552]" />
      <div className="ml-[33px]">
        <DockItem><Trash /></DockItem>
      </div>
    </div>
  );
}

/* Dark rippled water behind the windows. */
function Wallpaper() {
  return (
    <div className="absolute inset-0 bg-gradient-to-b from-[#6fa3d4] from-10% to-[#06121d] to-60%">
      <svg className="absolute bottom-0 left-0 h-[170px] w-full">
        <filter id="water" x="0" y="0" width="100%" height="100%">
          <feTurbulence type="fractalNoise" baseFrequency="0.07 0.3" numOctaves="4" seed="7" />
          <feColorMatrix values="0 0 0 0 .3  0 0 0 0 .46  0 0 0 0 .56  3 0 0 0 -1.4" />
        </filter>
        <linearGradient id="sea" x1="0" x2="1" y1="0" y2="0">
          <stop offset="0" stopColor="#061124" />
          <stop offset=".5" stopColor="#051424" />
          <stop offset="1" stopColor="#07131a" />
        </linearGradient>
        <linearGradient id="fade" x1="0" x2="1" y1="0" y2="0">
          <stop offset="0" stopColor="#444" />
          <stop offset=".55" stopColor="#ddd" />
          <stop offset="1" stopColor="#999" />
        </linearGradient>
        <mask id="fadeMask">
          <rect width="100%" height="100%" fill="url(#fade)" />
        </mask>
        <rect width="100%" height="100%" fill="url(#sea)" />
        <g mask="url(#fadeMask)">
          <g transform="rotate(-28 1440 85)">
            <rect x="-200" y="-900" width="3300" height="2000" filter="url(#water)" opacity=".7" />
          </g>
        </g>
      </svg>
    </div>
  );
}

export default function App() {
  return (
    <div className="relative flex h-[1800px] w-[2880px] flex-col overflow-hidden font-['Inter',sans-serif]">
      <Wallpaper />
      <div className="relative flex flex-1 flex-col">
        <MenuBar />
        <div className="mt-[2px] flex h-[1614px] shrink-0 flex-col overflow-hidden rounded-[20px] bg-[#d6e1fb]">
          <TabStrip />
          <div className="flex flex-1 flex-col overflow-hidden rounded-t-[20px] bg-white">
            <Toolbar />
            <BookmarksBar />
            <Page />
          </div>
        </div>
        <Dock />
      </div>
    </div>
  );
}
